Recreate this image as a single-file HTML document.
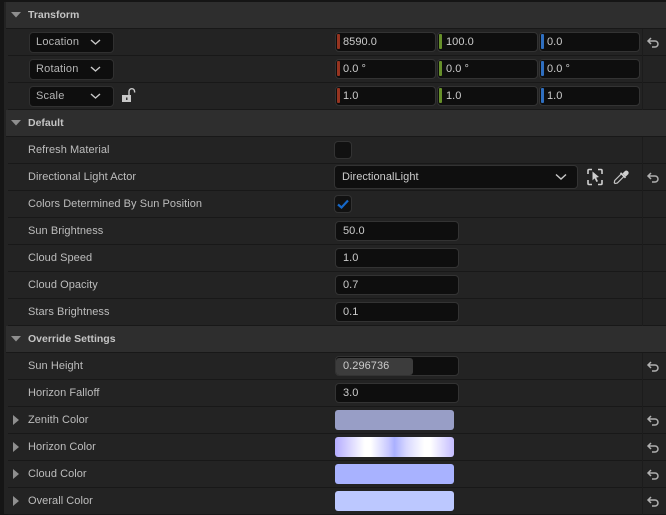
<!DOCTYPE html>
<html><head><meta charset="utf-8"><style>
*{box-sizing:border-box}
html,body{margin:0;padding:0;background:#151515}
#p{position:relative;width:666px;height:515px;overflow:hidden;background:#151515;font:11px "Liberation Sans",sans-serif;color:#bdbdbd;letter-spacing:.05px}
#p div,#p svg{position:absolute}
.bg{left:4px;width:662px;top:2px;height:512px;background:#232323}
.r{left:8px;width:658px;height:27px;border-bottom:1px solid #181818}
.h{left:6px;width:660px;height:27px;background:#2e2e2e;border-bottom:1px solid #181818}
.t{left:28px;line-height:14px;white-space:nowrap}
.b{font-weight:bold;font-size:10.5px;letter-spacing:0;color:#c4c4c4}
.v{width:1px;left:642px;background:#1c1c1c}
.i{height:20px;background:#0e0e0e;border:1px solid #333;border-radius:4px;color:#ccc;line-height:19px;padding-left:7px;white-space:nowrap}
.n{padding-left:7px}
.a{width:3px;height:15px;top:1px;left:1px;border-radius:1px}
.d{left:29px;width:85px;height:21px;background:#0e0e0e;border:1px solid #303030;border-radius:4px;line-height:18px;padding-left:6px;color:#b5b5b5;letter-spacing:.2px}
.c{width:119px;height:20px;left:335px;border-radius:3px}
</style></head><body><div id="p">
<div class="bg"></div>
<div class="h" style="top:2px"></div>
<div class="r" style="top:29px"></div><div class="r" style="top:56px"></div><div class="r" style="top:83px"></div>
<div class="h" style="top:110px"></div>
<div class="r" style="top:137px"></div><div class="r" style="top:164px"></div><div class="r" style="top:191px"></div><div class="r" style="top:218px"></div><div class="r" style="top:245px"></div><div class="r" style="top:272px"></div><div class="r" style="top:299px"></div>
<div class="h" style="top:326px"></div>
<div class="r" style="top:353px"></div><div class="r" style="top:380px"></div><div class="r" style="top:407px"></div><div class="r" style="top:434px"></div><div class="r" style="top:461px"></div><div class="r" style="top:488px"></div>
<div class="v" style="top:29px;height:81px"></div><div class="v" style="top:137px;height:189px"></div><div class="v" style="top:353px;height:162px"></div>

<svg style="left:0;top:0" width="666" height="515" fill="#8f8f8f">
<path d="M11 12h10l-5 5.500zM11 120h10l-5 5.500zM11 336h10l-5 5.500z"/>
<path d="M13 415l6 5-6 5zM13 442l6 5-6 5zM13 469l6 5-6 5zM13 496l6 5-6 5z"/>
<rect x="122" y="95" width="9" height="7" fill="#c8c8c8"/><rect x="126" y="97.500" width="1.500" height="2.500" fill="#333"/>
<path d="M129 95v-3.500a2.800 2.800 0 0 1 5.600 0v1" fill="none" stroke="#c8c8c8" stroke-width="1.400"/>
<g fill="none" stroke="#b0b0b0" stroke-width="1.500"><path d="M651 38l-3 3 3 3M648 41h7a3 3 0 0 1 0 6h-3"/>
<path d="M651 173l-3 3 3 3M648 176h7a3 3 0 0 1 0 6h-3"/>
<path d="M651 362l-3 3 3 3M648 365h7a3 3 0 0 1 0 6h-3"/>
<path d="M651 416l-3 3 3 3M648 419h7a3 3 0 0 1 0 6h-3"/>
<path d="M651 443l-3 3 3 3M648 446h7a3 3 0 0 1 0 6h-3"/>
<path d="M651 470l-3 3 3 3M648 473h7a3 3 0 0 1 0 6h-3"/>
<path d="M651 497l-3 3 3 3M648 500h7a3 3 0 0 1 0 6h-3"/></g>
<path d="M588 174v-3.500a1 1 0 0 1 1-1h3M598 169.500h3a1 1 0 0 1 1 1v3.500M602 180v3.500a1 1 0 0 1-1 1h-3M592 184.500h-3a1 1 0 0 1-1-1v-3.500" fill="none" stroke="#cfcfcf" stroke-width="1.600"/>
<path d="M592.500 171.500l6.500 5.500-2.800.6 1.800 3.600-1.600.8-1.800-3.600-2.100 2z" fill="#cfcfcf"/>
<path d="M615 183.500l-.7-.7.400-2.300 6.800-6.800 2.600 2.600-6.800 6.800z" fill="none" stroke="#c4c4c4" stroke-width="1.200"/>
<path d="M620.500 172.800l5 5" fill="none" stroke="#d0d0d0" stroke-width="1.700"/>
<path d="M622.500 173.500l2.500-2.500a2.300 2.300 0 0 1 3.200 3.200l-2.500 2.500z" fill="#d0d0d0"/>
</svg>

<div class="t b" style="top:8px">Transform</div>
<div class="d" style="top:32px">Location</div><div class="d" style="top:59px">Rotation</div><div class="d" style="top:86px">Scale</div>
<svg style="left:0;top:0" width="120" height="110" fill="none" stroke="#c8c8c8" stroke-width="1.400"><path d="M91 40l4.500 4 4.500-4M91 67l4.500 4 4.500-4M91 94l4.500 4 4.500-4"/></svg>

<div class="i n" style="left:335px;top:32px;width:101px">8590.0<div class="a" style="background:#963420"></div></div>
<div class="i n" style="left:437px;top:32px;width:101px"><span style="margin-left:1px">100.0</span><div class="a" style="background:#67902a"></div></div>
<div class="i n" style="left:539px;top:32px;width:101px">0.0<div class="a" style="background:#2f6fc0"></div></div>
<div class="i n" style="left:335px;top:59px;width:101px">0.0 °<div class="a" style="background:#963420"></div></div>
<div class="i n" style="left:437px;top:59px;width:101px"><span style="margin-left:1px">0.0 °</span><div class="a" style="background:#67902a"></div></div>
<div class="i n" style="left:539px;top:59px;width:101px">0.0 °<div class="a" style="background:#2f6fc0"></div></div>
<div class="i n" style="left:335px;top:86px;width:101px">1.0<div class="a" style="background:#963420"></div></div>
<div class="i n" style="left:437px;top:86px;width:101px"><span style="margin-left:1px">1.0</span><div class="a" style="background:#67902a"></div></div>
<div class="i n" style="left:539px;top:86px;width:101px">1.0<div class="a" style="background:#2f6fc0"></div></div>

<div class="t b" style="top:116px">Default</div>
<div class="t" style="top:143px">Refresh Material</div>
<div class="i" style="left:334px;top:141px;width:18px;height:18px;background:#111"></div>
<div class="t" style="top:170px">Directional Light Actor</div>
<div class="i" style="left:334px;top:165px;width:244px;height:24px;line-height:22px;background:#0f0f0f">DirectionalLight</div>
<svg style="left:550px;top:170px" width="24" height="14" fill="none" stroke="#c8c8c8" stroke-width="1.400"><path d="M6 4.500l5 4.500 5-4.500"/></svg>
<div class="t" style="top:197px">Colors Determined By Sun Position</div>
<div class="i" style="left:334px;top:195px;width:18px;height:18px;background:#111"></div>
<svg style="left:334px;top:195px" width="18" height="18" fill="none" stroke="#1668c8" stroke-width="2.200"><path d="M4 9.500l3.500 3L14 5.500"/></svg>
<div class="t" style="top:224px">Sun Brightness</div><div class="i n" style="left:335px;top:221px;width:124px">50.0</div>
<div class="t" style="top:251px">Cloud Speed</div><div class="i n" style="left:335px;top:248px;width:124px">1.0</div>
<div class="t" style="top:278px">Cloud Opacity</div><div class="i n" style="left:335px;top:275px;width:124px">0.7</div>
<div class="t" style="top:305px">Stars Brightness</div><div class="i n" style="left:335px;top:302px;width:124px">0.1</div>

<div class="t b" style="top:332px">Override Settings</div>
<div class="t" style="top:359px">Sun Height</div>
<div class="i" style="left:335px;top:356px;width:124px"></div>
<div style="left:336px;top:358px;width:77px;height:17px;background:#3c3c3c;border-radius:3px"></div>
<div class="t" style="left:343px;top:359px;color:#ccc">0.296736</div>
<div class="t" style="top:386px">Horizon Falloff</div><div class="i n" style="left:335px;top:383px;width:124px">3.0</div>
<div class="t" style="top:413px">Zenith Color</div><div class="c" style="top:410px;background:#989ec6"></div>
<div class="t" style="top:440px">Horizon Color</div><div class="c" style="top:437px;background:linear-gradient(90deg,#b4acff 0%,#fff 25%,#fff 30%,#c8c8ff 45%,#aab0ff 50%,#d8d8ff 60%,#fff 75%,#fff 80%,#c4bcff 100%)"></div>
<div class="t" style="top:467px">Cloud Color</div><div class="c" style="top:464px;background:#a8b2ff"></div>
<div class="t" style="top:494px">Overall Color</div><div class="c" style="top:491px;background:#bcc8ff"></div>
</div></body></html>
